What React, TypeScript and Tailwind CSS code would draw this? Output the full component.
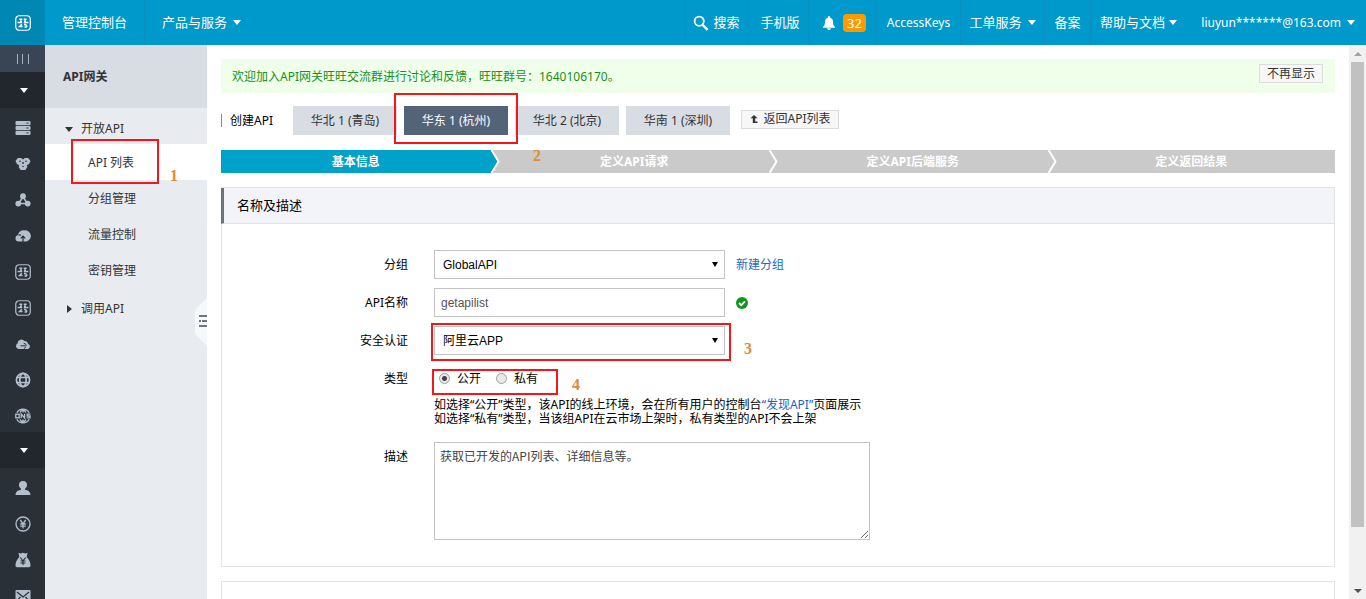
import React, { useState } from "react";

const Caret = () => (
  <svg width="8" height="5" viewBox="0 0 8 5" className="shrink-0 fill-current" aria-hidden="true">
    <path d="M0 0h8L4 5z" />
  </svg>
);

function Icon({ children }: { children: React.ReactNode }) {
  return (
    <svg width="16" height="16" viewBox="0 0 16 16" className="shrink-0" fill="currentColor" aria-hidden="true">
      {children}
    </svg>
  );
}

const CloudGlyph = () => (
  <>
    <rect x="0.75" y="0.75" width="14.5" height="14.5" rx="3.5" fill="none" stroke="currentColor" strokeWidth="1.2" />
    <path
      d="M4.300 4.200h3M8.700 4.200h3M2.600 7.600h4.600M8.800 7.600h4.600M5 5.900h2M9 5.900h2M6.800 9.300L4.600 11.600h3M9 9.500h1.500l1.700 2.300M9.500 12h2.500"
      fill="none"
      stroke="currentColor"
      strokeWidth="1.500"
    />
  </>
);

const services: { label: string; icon: React.ReactNode }[] = [
  {
    label: "云服务器",
    icon: (
      <>
        <rect x="0.5" y="1" width="15" height="4.2" rx="1" />
        <rect x="0.5" y="5.9" width="15" height="4.2" rx="1" />
        <rect x="0.5" y="10.8" width="15" height="4.2" rx="1" />
        <path d="M11.500 3.100h2M11.500 8h2M11.500 12.900h2" stroke="#293038" strokeWidth="1" />
      </>
    ),
  },
  {
    label: "云数据库",
    icon: (
      <>
        <path d="M2.800 2h3.400L8 3.400 9.800 2h3.400l2.300 3-1.600 3.300-2 .7.400 2.300-2 2.700H5.700l-2-2.700.4-2.300-2-.7L.5 5z" />
        <circle cx="5" cy="5.300" r="0.800" fill="#293038" />
        <circle cx="11" cy="5.300" r="0.800" fill="#293038" />
        <circle cx="8" cy="7" r="0.900" fill="#293038" />
        <circle cx="8" cy="10.500" r="0.700" fill="#293038" />
      </>
    ),
  },
  {
    label: "负载均衡",
    icon: (
      <>
        <path d="M8 5L3.500 11.500h9z" fill="none" stroke="currentColor" strokeWidth="1.5" />
        <circle cx="8" cy="4.200" r="2.900" />
        <circle cx="3.300" cy="11.600" r="2.900" />
        <circle cx="12.700" cy="11.600" r="2.900" />
      </>
    ),
  },
  {
    label: "对象存储",
    icon: (
      <>
        <path d="M3.500 13.500A3.300 3.300 0 0 1 3 7 5.600 5.600 0 0 1 9.500 2.300a5.700 5.700 0 0 1 2 11.200z" />
        <path d="M8 14V8.500M5.800 10.300L8 8l2.200 2.300M3.500 7.200Q5 6.600 6 7.300" fill="none" stroke="#293038" strokeWidth="1.200" />
      </>
    ),
  },
  { label: "云盾", icon: <CloudGlyph /> },
  { label: "云监控", icon: <CloudGlyph /> },
  {
    label: "云存储",
    icon: (
      <>
        <path d="M3.600 13A3 3 0 0 1 2.500 7.400 3.900 3.900 0 0 1 9.500 5 4 4 0 0 1 13.200 8a2.600 2.600 0 0 1-.4 5z" />
        <path d="M5.500 9.800h5M8.800 7.500c2 0 2.600 1.200 2.200 2.300M9 12.500l2-1.800" fill="none" stroke="#293038" strokeWidth="1" />
      </>
    ),
  },
  {
    label: "域名",
    icon: (
      <g fill="none" stroke="currentColor" strokeWidth="1.7">
        <circle cx="8" cy="8" r="6.600" />
        <ellipse cx="8" cy="8" rx="3.200" ry="6.600" />
        <path d="M1.500 5.500h13M1.500 10.500h13" />
      </g>
    ),
  },
  {
    label: "消息服务",
    icon: (
      <g fill="none" stroke="currentColor" strokeWidth="1.3">
        <path d="M1.800 4.800a7 7 0 0 1 12.400 0M1.800 11.200a7 7 0 0 0 12.400 0M5 4.500C6 1.500 10 1.500 11 4.500M5 11.500c1 3 5 3 6 0M8 1v3.500M8 11.500V15" />
        <rect x="0.800" y="6.200" width="3.400" height="3.600" />
        <path d="M6.200 10.300V6l3.400 4V5.700M15.400 6.200h-3.200V8h2.800v1.800h-3.300" />
      </g>
    ),
  },
];

const account: { label: string; icon: React.ReactNode }[] = [
  {
    label: "用户",
    icon: <path d="M8 1c2.600 0 4 1.600 4 3.800 0 1.800-.8 3.200-2 4v1c2.400.5 5.200 1.400 5.500 5.200H.5C.8 11.200 3.600 10.300 6 9.800v-1c-1.200-.8-2-2.200-2-4C4 2.600 5.400 1 8 1z" />,
  },
  {
    label: "费用",
    icon: (
      <g fill="none" stroke="currentColor" strokeWidth="1.300">
        <circle cx="8" cy="8" r="7" />
        <path d="M5.300 4L8 7.800 10.700 4M5.200 8h5.600M5.200 10.200h5.600M8 7.500v5" />
      </g>
    ),
  },
  {
    label: "续费",
    icon: (
      <>
        <path d="M3.500 .8l2.200.7L8 .8l2.300.7 2.200-.7-.8 4.300c2.400 2.500 3.800 5.200 3.800 8.400 0 1-.6 1.700-1.600 1.700H2.100c-1 0-1.600-.7-1.600-1.700 0-3.200 1.400-5.900 3.800-8.400z" />
        <path d="M5.300 5.500L8 8.800l2.700-3.300M5.500 9h5M5.500 11h5M8 8.500V13" fill="none" stroke="#293038" strokeWidth="1.100" />
      </>
    ),
  },
  {
    label: "消息",
    icon: (
      <>
        <rect x="0.500" y="2" width="15" height="12" rx="1" />
        <path d="M2 4l6 5 6-5M2 12.500l3.500-3.500M14 12.500L10.500 9" fill="none" stroke="#293038" strokeWidth="1.200" />
      </>
    ),
  },
];

function RailItem({ label, icon }: { label: string; icon: React.ReactNode }) {
  return (
    <a href="#" aria-label={label} className="flex h-9 shrink-0 items-center justify-center pt-1 text-[#b3bfcd]">
      <Icon>{icon}</Icon>
    </a>
  );
}

function RailToggle({ label }: { label: string }) {
  return (
    <button aria-label={label} className="flex h-9 w-full shrink-0 items-center justify-center bg-[#22272d] pl-0.5 text-white">
      <Caret />
    </button>
  );
}

const navItem = "flex h-full items-center justify-center border-r border-[#0a8fc0] whitespace-nowrap";

function Header() {
  return (
    <header className="flex h-[45px] shrink-0 items-stretch justify-between bg-[#0099cc] text-[13px] text-white">
      <div className="flex">
        <a href="#" aria-label="首页" className="flex w-[45px] items-center justify-center bg-[#0087b4]">
          <Icon><CloudGlyph /></Icon>
        </a>
        <a href="#" className={`${navItem} w-[100px]`}>管理控制台</a>
        <button className="flex items-center gap-1.5 px-[17px]">产品与服务<Caret /></button>
      </div>
      <nav className="flex">
        <button className={`${navItem} w-[63px] gap-1 border-l`}>
          <svg width="16" height="16" viewBox="0 0 16 16" fill="none" stroke="currentColor" aria-hidden="true">
            <circle cx="6.200" cy="6.200" r="4.600" strokeWidth="1.800" />
            <path d="M9.600 9.800l5 5" strokeWidth="2.400" />
          </svg>
          搜索
        </button>
        <a href="#" className={`${navItem} w-[61px] pl-1`}>手机版</a>
        <a href="#" aria-label="消息 32" className={`${navItem} w-[68px] gap-2 pl-1`}>
          <svg width="12" height="14" viewBox="0 0 12 14" className="fill-current" aria-hidden="true">
            <path d="M6 0c.6 0 1 .4 1 1v.5c2 .6 3 2.200 3 4.300 0 2.700.7 4.200 2 5.200v.8H0V11c1.300-1 2-2.500 2-5.200 0-2.100 1-3.700 3-4.300V1c0-.6.4-1 1-1zM4 12.300h4c-.2 1-1 1.700-2 1.700s-1.800-.7-2-1.700z" />
          </svg>
          <span className="rounded bg-[#ff9900] px-1 text-[13px] leading-[18px]">32</span>
        </a>
        <a href="#" className={`${navItem} w-[84px] text-xs`}>AccessKeys</a>
        <button className={`${navItem} w-[84px] gap-1.5`}>工单服务<Caret /></button>
        <a href="#" className={`${navItem} w-[46px]`}>备案</a>
        <button className="flex w-[95px] items-center justify-center gap-1 whitespace-nowrap">帮助与文档<Caret /></button>
        <button className="flex w-[180px] items-center justify-end gap-1.5 pr-[11px] text-xs whitespace-nowrap">liuyun*******@163.com<Caret /></button>
      </nav>
    </header>
  );
}

function SideMenu() {
  const items = ["API 列表", "分组管理", "流量控制", "密钥管理"];
  return (
    <aside className="relative w-[162px] shrink-0 bg-[#e8ecf1] text-[#333]">
      <h1 className="flex h-[63px] items-center bg-[#d8dce3] pl-[18px] font-bold">API网关</h1>
      <button className="flex h-9 w-full items-center gap-2 pt-1.5 pl-5">
        <Caret />开放API
      </button>
      <ul>
        {items.map((t, i) => (
          <li key={t}>
            <a href="#" className={i === 0 ? "flex h-9 items-center bg-white pt-0.5 pl-[43px]" : "flex h-9 items-center pt-0.5 pl-[43px]"}>{t}</a>
          </li>
        ))}
      </ul>
      <button className="flex h-10 w-full items-center gap-2 pt-0.5 pl-[22px]">
        <svg width="5" height="8" viewBox="0 0 5 8" className="mr-px fill-current" aria-hidden="true"><path d="M0 0v8l5-4z" /></svg>
        调用API
      </button>
      <button aria-label="收起菜单" className="absolute top-[253px] right-0">
        <svg width="12" height="48" viewBox="0 0 12 48" className="block">
          <path d="M12 0v48L2 38Q0 36 0 33V15q0-3 2-5z" fill="#f7f8fa" />
          <path d="M4 18h8M7 23h5M4 28h8M4 23h2" stroke="#444b57" strokeWidth="1.600" />
        </svg>
      </button>
    </aside>
  );
}

const regions = ["华北 1 (青岛)", "华东 1 (杭州)", "华北 2 (北京)", "华南 1 (深圳)"];
const steps = ["基本信息", "定义API请求", "定义API后端服务", "定义返回结果"];

function Steps() {
  return (
    <ol className="mt-[15px] grid h-[23px] grid-cols-4 text-center font-bold leading-[23px] text-white">
      {steps.map((s, i) => (
        <li key={s} className={i === 0 ? "flex bg-[#00a2ca]" : "flex bg-[#cacaca]"}>
          <span className="flex-1">{s}</span>
          <svg width="9" height="23" viewBox="0 0 9 23" className="shrink-0" aria-hidden="true">
            {i < 3 && (
              <>
                <path d="M0 0h9v23H0l7-11.500z" fill="#cacaca" />
                <path d="M.5 0L7.500 11.500.5 23" fill="none" stroke="#fff" strokeWidth="2" />
              </>
            )}
          </svg>
        </li>
      ))}
    </ol>
  );
}

function Field({ label, id, children }: { label: string; id?: string; children: React.ReactNode }) {
  return (
    <div className="flex">
      <label htmlFor={id} className="mr-[26px] w-[186px] shrink-0 text-right leading-[29px]">{label}</label>
      <div className="min-w-0 flex-1">{children}</div>
    </div>
  );
}

function Select({ id, value }: { id: string; value: string }) {
  return (
    <div className="relative w-[291px]">
      <select
        id={id}
        defaultValue={value}
        className="h-[29px] w-full appearance-none border border-[#c4c4c4] bg-white px-2 font-['Liberation_Sans','Noto_Sans_CJK_SC',sans-serif] text-xs"
      >
        <option>{value}</option>
      </select>
      <svg width="6" height="5" viewBox="0 0 6 5" className="pointer-events-none absolute top-3 right-[7px]" aria-hidden="true">
        <path d="M0 0h6L3 5z" />
      </svg>
    </div>
  );
}

function Radio({ label, checked, onChange }: { label: string; checked: boolean; onChange: () => void }) {
  return (
    <label className="flex items-center gap-[7px]">
      <input
        type="radio"
        name="visibility"
        checked={checked}
        onChange={onChange}
        className="h-[11px] w-[11px] appearance-none rounded-full border border-[#a0a0a0] bg-[#e8e8e8] checked:bg-[radial-gradient(circle,#444_0_2px,#e8e8e8_3px)]"
      />
      {label}
    </label>
  );
}

function Marker({ box, digit, n }: { box: string; digit: string; n: number }) {
  return (
    <>
      <div className={`pointer-events-none absolute border-2 border-[#f2171b] ${box}`} />
      <span className={`pointer-events-none absolute font-['Liberation_Serif',serif] text-base leading-4 font-bold text-[#e08a35] ${digit}`}>{n}</span>
    </>
  );
}

export default function App() {
  const [open, setOpen] = useState(true);
  return (
    <div className="relative flex h-screen flex-col overflow-hidden bg-white font-['Noto_Sans','Noto_Sans_CJK_SC',sans-serif] text-xs text-black">
      <Header />
      <div className="flex min-h-0 flex-1">
        <nav className="flex w-[45px] shrink-0 flex-col overflow-hidden bg-[#293038]">
          <button aria-label="展开导航" className="flex h-[27px] shrink-0 items-center justify-center bg-[#394555] text-[#a5b0be]">
            <svg width="12" height="10" viewBox="0 0 12 10" stroke="currentColor" aria-hidden="true"><path d="M.5 0v10M5.500 0v10M11.500 0v10" /></svg>
          </button>
          <RailToggle label="产品" />
          {services.map((s) => <RailItem key={s.label} {...s} />)}
          <RailToggle label="用户中心" />
          {account.map((s) => <RailItem key={s.label} {...s} />)}
        </nav>
        <SideMenu />

        <main className="min-w-0 flex-1 overflow-hidden px-[14px] pt-[14px]">
          <div className="flex h-[34px] items-start justify-between bg-[#f0ffe9] pr-3 pl-[11px] leading-[34px] text-[#1a8f1a]">
            <p className="pt-px">欢迎加入API网关旺旺交流群进行讨论和反馈，旺旺群号：1640106170。</p>
            <button className="mt-[5px] h-[19px] border border-[#dcdcdc] bg-[#f7f7f7] px-[7px] leading-[17px] text-[#333]">不再显示</button>
          </div>

          <div className="mt-[13px] flex h-[29px] items-center">
            <h2 className="mr-5 flex items-center gap-2"><span className="h-[13px] w-px bg-[#7a8ca0]" />创建API</h2>
            <div className="flex gap-[7px]">
              {regions.map((r, i) => (
                <button key={r} className={i === 1 ? "h-[29px] w-[104px] bg-[#546478] text-white" : "h-[29px] w-[104px] bg-[#d8dce3] text-[#333]"}>{r}</button>
              ))}
            </div>
            <button className="mb-[3px] ml-[11px] flex h-[19px] w-[98px] items-center justify-center gap-1.5 border border-[#dcdcdc] bg-[#f7f7f7] text-[#333]">
              <svg width="8" height="8" viewBox="0 0 8 8" aria-hidden="true">
                <path d="M4 0L.5 3.200h2.300V8H7.500V6.500H5.200V3.200h2.300z" fill="#333" />
              </svg>
              返回API列表
            </button>
          </div>

          <Steps />

          <section className="mt-[14px] border border-[#e1e3e8]">
            <h3 className="-ml-px flex h-9 items-center border-b border-l-[3px] border-b-[#e1e3e8] border-l-[#6d7280] bg-[#f3f4f9] pl-[13px] text-[13px]">名称及描述</h3>
            <form className="flex flex-col gap-[9px] pt-[26px] pb-[26px]">
              <Field label="分组" id="group">
                <div className="flex items-center gap-[11px]">
                  <Select id="group" value="GlobalAPI" />
                  <a href="#" className="text-[#1c6ac0]">新建分组</a>
                </div>
              </Field>
              <Field label="API名称" id="name">
                <div className="flex items-center gap-[11px]">
                  <input id="name" defaultValue="getapilist" className="h-[29px] w-[291px] border border-[#c4c4c4] px-1.5 font-['Liberation_Sans',sans-serif] text-xs text-[#555]" />
                  <svg width="12" height="12" viewBox="0 0 12 12" aria-label="可用">
                    <circle cx="6" cy="6" r="6" fill="#11951a" />
                    <path d="M3 6l2.200 2.200L9 4.400" fill="none" stroke="#fff" strokeWidth="1.800" />
                  </svg>
                </div>
              </Field>
              <Field label="安全认证" id="auth">
                <Select id="auth" value="阿里云APP" />
              </Field>
              <Field label="类型">
                <div className="flex h-[29px] items-center gap-[15px] pl-[5px]">
                  <Radio label="公开" checked={open} onChange={() => setOpen(true)} />
                  <Radio label="私有" checked={!open} onChange={() => setOpen(false)} />
                </div>
                <p className="mt-[5px] leading-[14px]">
                  如选择“公开”类型，该API的线上环境，会在所有用户的控制台<a href="#" className="text-[#1c5fc4]">“发现API”</a>页面展示
                  <br />
                  如选择“私有”类型，当该组API在云市场上架时，私有类型的API不会上架
                </p>
              </Field>
              <div className="mt-[7px]">
                <Field label="描述" id="desc">
                  <textarea
                    id="desc"
                    defaultValue="获取已开发的API列表、详细信息等。"
                    className="block h-[98px] w-[436px] resize border border-[#c4c4c4] px-[5px] py-1 font-['Noto_Sans_CJK_SC',sans-serif] text-xs leading-[18px] text-[#444]"
                  />
                </Field>
              </div>
            </form>
          </section>
          <section className="mt-[14px] h-20 border border-[#e1e3e8]" />
        </main>

        <div className="flex w-[17px] shrink-0 flex-col items-center bg-[#f1f1f1]" aria-hidden="true">
          <div className="flex h-[17px] shrink-0 items-center">
            <svg width="8" height="4" viewBox="0 0 8 4" fill="#a3a3a3"><path d="M0 4h8L4 0z" /></svg>
          </div>
          <div className="w-[13px] basis-[465px] bg-[#c1c1c1]" />
          <div className="flex-1" />
          <div className="flex h-[17px] shrink-0 items-center">
            <svg width="8" height="4" viewBox="0 0 8 4" fill="#505050"><path d="M0 0h8L4 4z" /></svg>
          </div>
        </div>
      </div>

      <Marker n={1} box="top-[139px] left-[71px] h-[45px] w-[88px]" digit="top-[168px] left-[170px]" />
      <Marker n={2} box="top-[93px] left-[394px] h-[51px] w-[124px]" digit="top-[148px] left-[533px]" />
      <Marker n={3} box="top-[323px] left-[431px] h-[38px] w-[300px]" digit="top-[341px] left-[744px]" />
      <Marker n={4} box="top-[369px] left-[432px] h-[26px] w-[126px]" digit="top-[377px] left-[572px]" />
    </div>
  );
}
